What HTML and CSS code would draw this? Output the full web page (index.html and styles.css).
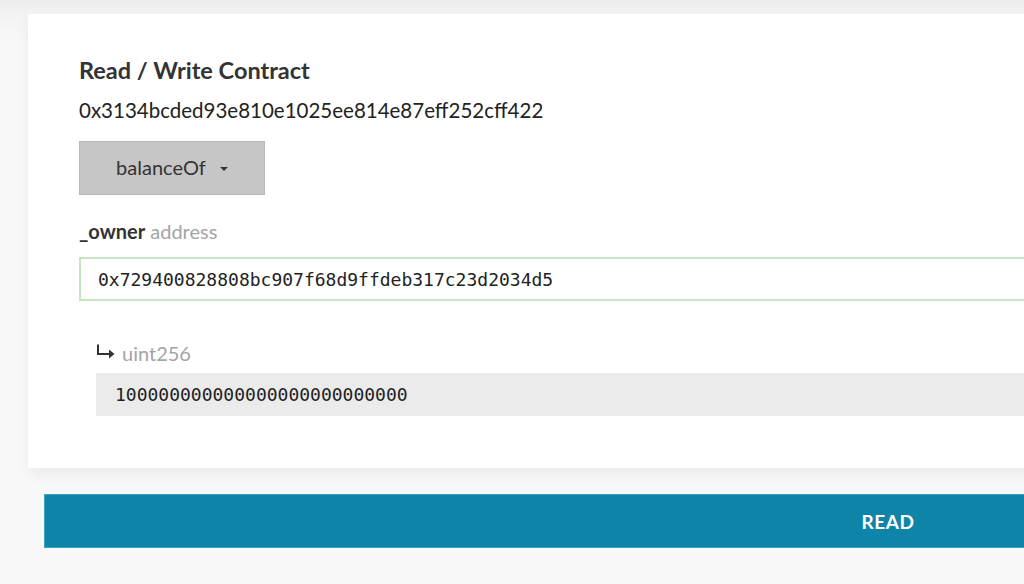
FILE: index.html
```html
<!DOCTYPE html>
<html>
<head>
<meta charset="utf-8">
<link rel="stylesheet" href="styles.css">
</head>
<body>
<div class="page">
  <div class="card">
    <h1 class="title">Read / Write Contract</h1>
    <div class="addr">0x3134bcded93e810e1025ee814e87eff252cff422</div>
    <button class="select">balanceOf <span class="caret"></span></button>
    <div class="param"><span class="pname">_owner</span> <span class="ptype">address</span></div>
    <div class="input">0x729400828808bc907f68d9ffdeb317c23d2034d5</div>
    <div class="result">
      <div class="rlabel">
        <svg class="arrow" width="19" height="16" viewBox="0 0 19 16"><path d="M2 1.5 V11 H15" fill="none" stroke="#333" stroke-width="2"/><path d="M13 6.5 L18.5 11 L13 15.5 Z" fill="#333"/></svg>
        <span class="ptype">uint256</span>
      </div>
      <div class="output">100000000000000000000000000</div>
    </div>
  </div>
  <div class="actions">
    <button class="read">READ</button>
  </div>
</div>
</body>
</html>
```
FILE: styles.css
```css
html, body {
  margin: 0;
  padding: 0;
  width: 1024px;
  height: 584px;
  overflow: hidden;
  background: #f8f8f8;
  font-family: Lato, "Liberation Sans", sans-serif;
}
.page {
  padding: 14px 0 0 28px;
  background: linear-gradient(#ececec 0, #f3f3f3 14px, #f8f8f8 40px);
  height: 584px;
  box-sizing: border-box;
}
.card {
  width: 1100px;
  background: #fff;
  padding: 41px 0 52px 51px;
  box-sizing: border-box;
  box-shadow: 0 6px 14px rgba(0,0,0,0.06);
}
.title {
  margin: 0;
  font-size: 23.5px;
  font-weight: 700;
  color: #333;
  line-height: 30px;
}
.addr {
  margin-top: 13px;
  font-size: 20.5px;
  color: #222;
  line-height: 25px;
}
.select {
  margin-top: 18px;
  width: 186px;
  height: 54px;
  background: #c6c6c6;
  border: 1px solid #b9b9b9;
  font-family: Lato, "Liberation Sans", sans-serif;
  font-size: 20px;
  color: #333;
  display: flex;
  align-items: center;
  justify-content: center;
  gap: 14px;
  padding: 0 0 2px 0;
}
.caret {
  width: 0;
  height: 0;
  border-left: 4px solid transparent;
  border-right: 4px solid transparent;
  border-top: 4px solid #333;
  margin-top: 3px;
}
.param {
  margin-top: 23px;
  font-size: 20px;
  line-height: 26px;
}
.pname {
  font-weight: 700;
  color: #333;
}
.ptype {
  color: #a4a4a4;
}
.input {
  margin-top: 13px;
  height: 44px;
  box-sizing: border-box;
  border: 2px solid #c4e6c0;
  padding: 0 0 0 17px;
  display: flex;
  align-items: center;
  font-family: "DejaVu Sans Mono", monospace;
  font-size: 18px;
  color: #222;
}
.result {
  margin: 39px 0 0 17px;
}
.rlabel {
  font-size: 20px;
  line-height: 26px;
  display: flex;
  align-items: center;
  gap: 7px;
}
.arrow {
  display: block;
  margin-top: -4px;
}
.output {
  margin-top: 7px;
  height: 43px;
  background: #ebebeb;
  display: flex;
  align-items: center;
  padding-left: 19px;
  font-family: "DejaVu Sans Mono", monospace;
  font-size: 18px;
  color: #222;
}
.actions {
  padding: 26px 0 0 16px;
}
.read {
  width: 1688px;
  height: 54px;
  background: #0e84a8;
  border: 1px solid #3aa6c6;
  color: #fff;
  font-family: Lato, "Liberation Sans", sans-serif;
  font-weight: 700;
  font-size: 19px;
  letter-spacing: 0.5px;
  display: block;
}
```
